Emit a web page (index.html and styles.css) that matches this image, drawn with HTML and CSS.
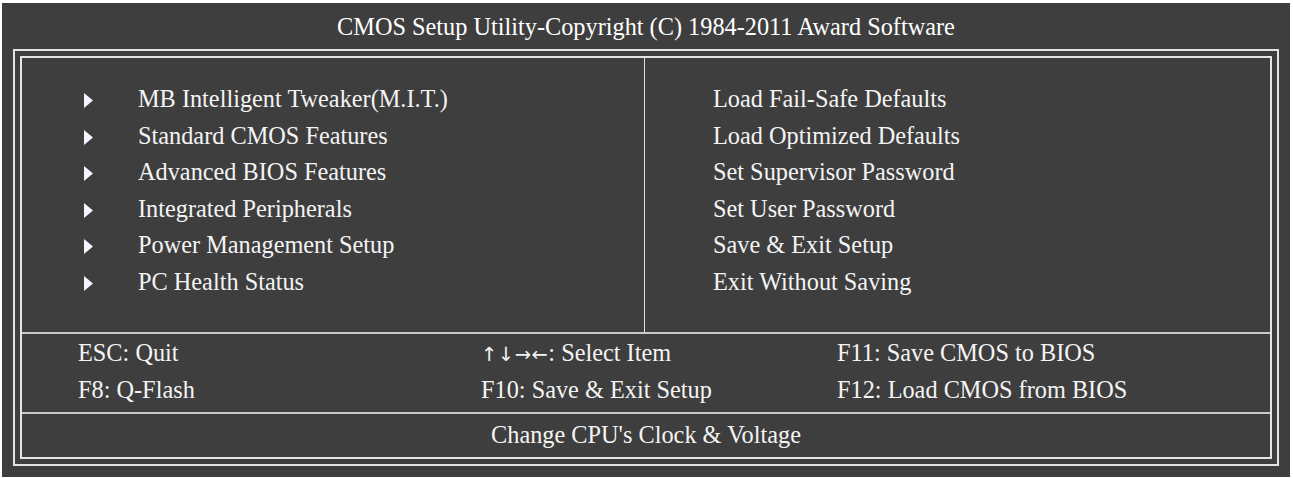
FILE: index.html
```html
<!DOCTYPE html>
<html>
<head>
  <meta charset="UTF-8">
  <title>CMOS Setup Utility</title>
  <link rel="stylesheet" href="styles.css">
</head>
<body>
  <div class="screen">
    <div class="title">CMOS Setup Utility-Copyright (C) 1984-2011 Award Software</div>

    <div class="frame-outer">
      <div class="frame-inner">

        <!-- main menu -->
        <div class="menu">
          <ul class="menu-left">
            <li><span class="arrow"><svg width="9" height="15" viewBox="0 0 9 15"><polygon points="0,0 9,7.5 0,15" fill="#f4f6ff"/></svg></span>MB Intelligent Tweaker(M.I.T.)</li>
            <li><span class="arrow"><svg width="9" height="15" viewBox="0 0 9 15"><polygon points="0,0 9,7.5 0,15" fill="#f4f6ff"/></svg></span>Standard CMOS Features</li>
            <li><span class="arrow"><svg width="9" height="15" viewBox="0 0 9 15"><polygon points="0,0 9,7.5 0,15" fill="#f4f6ff"/></svg></span>Advanced BIOS Features</li>
            <li><span class="arrow"><svg width="9" height="15" viewBox="0 0 9 15"><polygon points="0,0 9,7.5 0,15" fill="#f4f6ff"/></svg></span>Integrated Peripherals</li>
            <li><span class="arrow"><svg width="9" height="15" viewBox="0 0 9 15"><polygon points="0,0 9,7.5 0,15" fill="#f4f6ff"/></svg></span>Power Management Setup</li>
            <li><span class="arrow"><svg width="9" height="15" viewBox="0 0 9 15"><polygon points="0,0 9,7.5 0,15" fill="#f4f6ff"/></svg></span>PC Health Status</li>
          </ul>
          <ul class="menu-right">
            <li>Load Fail-Safe Defaults</li>
            <li>Load Optimized Defaults</li>
            <li>Set Supervisor Password</li>
            <li>Set User Password</li>
            <li>Save &amp; Exit Setup</li>
            <li>Exit Without Saving</li>
          </ul>
        </div>

        <!-- key help -->
        <div class="keys">
          <div>ESC: Quit</div>
          <div><span class="keyarrows">↑↓→←</span>: Select Item</div>
          <div>F11: Save CMOS to BIOS</div>
          <div>F8: Q-Flash</div>
          <div>F10: Save &amp; Exit Setup</div>
          <div>F12: Load CMOS from BIOS</div>
        </div>

        <!-- item description -->
        <div class="status">Change CPU's Clock &amp; Voltage</div>

      </div>
    </div>
  </div>
</body>
</html>
```

FILE: styles.css
```css
body {
  margin: 0;
  background-color: #ffffff;
  font-family: "Liberation Serif", "Times New Roman", serif;
  font-size: 24.3px;
  color: #f4f4f4;
}
.screen {
  margin: 3px 0 0 2px;
  width: 1288px;
  height: 474px;
  background-color: #3e3e3e;
  box-sizing: border-box;
  padding: 0 11px;
}
.title {
  height: 46px;
  line-height: 48px;
  text-align: center;
  color: #ffffff;
}
.frame-outer {
  border: 2px solid #e4e4e4;
  padding: 5px;
  height: 417px;
  box-sizing: border-box;
}
.frame-inner {
  border: 2px solid #e4e4e4;
  height: 403px;
  box-sizing: border-box;
  display: flex;
  flex-direction: column;
}
.menu {
  display: flex;
  height: 274px;
  border-bottom: 2px solid #c9c9c9;
}
.menu ul {
  list-style: none;
  margin: 0;
  padding-top: 23px;
  box-sizing: border-box;
}
.menu li {
  height: 36.6px;
  line-height: 36.6px;
  white-space: nowrap;
}
.menu-left {
  width: 623px;
  padding-left: 62px;
  border-right: 1px solid #e0e0e0;
}
.menu-right {
  flex: 1;
  padding-left: 68px;
}
.arrow {
  display: inline-block;
  width: 54px;
}
.arrow svg {
  vertical-align: -1px;
}
.keys {
  display: grid;
  grid-template-columns: 403px 356px 1fr;
  grid-auto-rows: 37px;
  align-items: center;
  padding-left: 56px;
  height: 78px;
  border-bottom: 2px solid #c9c9c9;
}
.keyarrows {
  font-family: "DejaVu Sans", sans-serif;
  font-size: 19.5px;
  letter-spacing: 0.5px;
}
.status {
  flex: 1;
  display: flex;
  align-items: center;
  justify-content: center;
  padding-bottom: 1px;
}
```
